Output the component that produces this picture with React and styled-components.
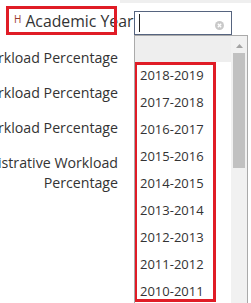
import React from 'react';
import styled, { createGlobalStyle } from 'styled-components';

const years = [
  '2018-2019', '2017-2018', '2016-2017', '2015-2016', '2014-2015',
  '2013-2014', '2012-2013', '2011-2012', '2010-2011',
];

export default function App() {
  return (
    <>
      <GlobalStyle />
      <TopStrip />
      <Form>
        <FirstRow>
          <LabelCell>
            <MarkedLabel>
              <Marker>H</Marker>
              <LabelText $big>Academic Year</LabelText>
            </MarkedLabel>
          </LabelCell>
          <Control>
            <SearchBox>
              <Caret />
              <ClearIcon>
                <svg width="9" height="9" viewBox="0 0 9 9">
                  <circle cx="4.5" cy="4.5" r="4.5" fill="#c9c9c9" />
                  <path d="M2.8 2.8 L6.2 6.2 M6.2 2.8 L2.8 6.2" stroke="#fff" strokeWidth="1.3" />
                </svg>
              </ClearIcon>
              <Dropdown>
                <OptionList>
                  <BlankOption />
                  <Highlight>
                    {years.map((y) => (
                      <Option key={y}>{y}</Option>
                    ))}
                  </Highlight>
                </OptionList>
                <Scrollbar>
                  <ArrowButton>
                    <svg width="7" height="4" viewBox="0 0 7 4">
                      <path d="M0 4 L3.5 0 L7 4 Z" fill="#a3a3a3" />
                    </svg>
                  </ArrowButton>
                  <Thumb />
                </Scrollbar>
              </Dropdown>
            </SearchBox>
          </Control>
        </FirstRow>
        <Row>
          <LabelCell><LabelText>Teaching Workload Percentage</LabelText></LabelCell>
        </Row>
        <Row>
          <LabelCell><LabelText>Research Workload Percentage</LabelText></LabelCell>
        </Row>
        <Row>
          <LabelCell><LabelText>Service Workload Percentage</LabelText></LabelCell>
        </Row>
        <Row>
          <LabelCell>
            <LabelText>Administrative Workload<br />Percentage</LabelText>
          </LabelCell>
        </Row>
      </Form>
    </>
  );
}

const GlobalStyle = createGlobalStyle`
  html, body {
    margin: 0;
    min-height: 100vh;
  }
  body {
    background: #fff;
    font-family: "Open Sans", "Noto Sans", sans-serif;
    color: #333;
  }
`;

const TopStrip = styled.div`
  margin-left: 120px;
  height: 3px;
  background: #efefef;
`;

const Form = styled.div`
  display: flex;
  flex-direction: column;
  gap: 15px;
  padding-top: 3px;
`;

const FirstRow = styled.div`
  display: flex;
  gap: 16px;
  height: 29px;
  margin-bottom: -2px;
`;

const Row = styled.div`
  display: flex;
  gap: 16px;
`;

const LabelCell = styled.div`
  width: 118px;
  flex: none;
  display: flex;
  justify-content: flex-end;
  text-align: right;
`;

const MarkedLabel = styled.div`
  position: relative;
  width: 111px;
  margin-right: 1px;
  display: flex;
  align-items: center;
  padding-left: 8px;
  box-sizing: border-box;

  &::after {
    content: "";
    position: absolute;
    inset: 0;
    border: 3px solid #e01c26;
  }
`;

const Marker = styled.span`
  flex: none;
  font-size: 10px;
  color: #9a3b2e;
  align-self: flex-start;
  margin-top: 6px;
  margin-right: 4px;
`;

const LabelText = styled.span`
  flex: none;
  font-size: ${(p) => (p.$big ? '15.8px' : '14.2px')};
  line-height: 20px;
  white-space: nowrap;
  color: #333;
`;

const Control = styled.div`
  flex: 1;
  display: flex;
  align-items: flex-end;
`;

const SearchBox = styled.div`
  position: relative;
  width: 98px;
  height: 24px;
  box-sizing: border-box;
  border: 1px solid #56647f;
  display: flex;
  align-items: center;
  justify-content: space-between;
  padding: 0 7px 0 4px;
`;

const Caret = styled.span`
  width: 1px;
  height: 18px;
  background: #222;
`;

const ClearIcon = styled.span`
  display: flex;
  margin-top: 4px;
`;

const Dropdown = styled.div`
  position: absolute;
  top: 23px;
  left: -1px;
  width: 114px;
  height: 269px;
  box-sizing: border-box;
  border: 1px solid #aaa;
  border-bottom: none;
  background: #fff;
  display: flex;
  overflow: hidden;
`;

const OptionList = styled.div`
  flex: 1;
  display: flex;
  flex-direction: column;
`;

const BlankOption = styled.div`
  height: 26px;
  flex: none;
  background: #eeeeee;
`;

const Highlight = styled.div`
  position: relative;
  flex: none;
  width: 82px;
  height: 240px;
  margin-left: -1px;

  &::after {
    content: "";
    position: absolute;
    inset: 0;
    border: 3px solid #e01c26;
  }
`;

const Option = styled.div`
  height: 27px;
  line-height: 27px;
  padding-left: 6px;
  font-size: 13px;
  color: #333;
  white-space: nowrap;
`;

const Scrollbar = styled.div`
  width: 16px;
  background: #f1f1f1;
  display: flex;
  flex-direction: column;
  align-items: center;
`;

const ArrowButton = styled.div`
  height: 17px;
  display: flex;
  align-items: center;
  justify-content: center;
  padding-top: 2px;
  box-sizing: border-box;
`;

const Thumb = styled.div`
  width: 12px;
  height: 115px;
  background: #c1c1c1;
`;
